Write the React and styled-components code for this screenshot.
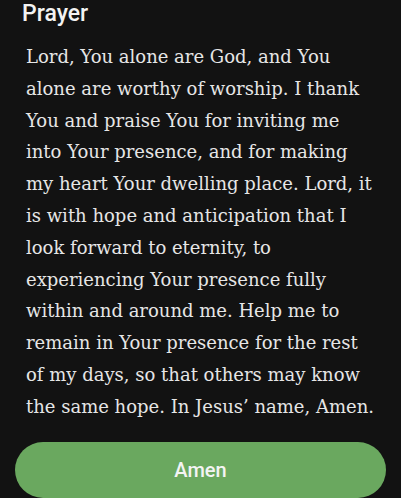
import React from 'react';
import styled, { createGlobalStyle } from 'styled-components';

const prayerLines = [
    'Lord, You alone are God, and You',
    'alone are worthy of worship. I thank',
    'You and praise You for inviting me',
    'into Your presence, and for making',
    'my heart Your dwelling place. Lord, it',
    'is with hope and anticipation that I',
    'look forward to eternity, to',
    'experiencing Your presence fully',
    'within and around me. Help me to',
    'remain in Your presence for the rest',
    'of my days, so that others may know',
    'the same hope. In Jesus\u2019 name, Amen.',
];

export default () => {
    return (
        <>
            <GlobalStyle />
            <Screen>
                <Title>{'Prayer'}</Title>
                <PrayerText>{prayerLines.join('\n')}</PrayerText>
                <AmenButton type='button'>{'Amen'}</AmenButton>
            </Screen>
        </>
    );
};

const GlobalStyle = createGlobalStyle`
    html, body {
        margin: 0;
        padding: 0;
        background: #121212;
    }
`;

const Screen = styled.div`
    width: 401px;
    height: 498px;
    overflow: hidden;
    background: #121212;
    display: flex;
    flex-direction: column;
    padding: 0 15px;
    box-sizing: border-box;
`;

const Title = styled.h2`
    margin: 0;
    padding: 0 0 0 7px;
    font-family: Roboto, "Liberation Sans", sans-serif;
    font-weight: 500;
    font-size: 23px;
    line-height: 28px;
    color: #f2f2f2;
`;

const PrayerText = styled.p`
    margin: 13px 0 0;
    padding: 0 0 0 11px;
    white-space: pre-line;
    font-family: "DejaVu Serif", serif;
    font-size: 18px;
    line-height: 31.8px;
    color: #e6e6e6;
`;

const AmenButton = styled.button`
    margin-top: 19px;
    flex-shrink: 0;
    height: 56px;
    width: 371px;
    border: none;
    border-radius: 28px;
    background: #6aa85f;
    color: #f4f4f4;
    font-family: Roboto, "Liberation Sans", sans-serif;
    font-weight: 500;
    font-size: 20px;
`;
